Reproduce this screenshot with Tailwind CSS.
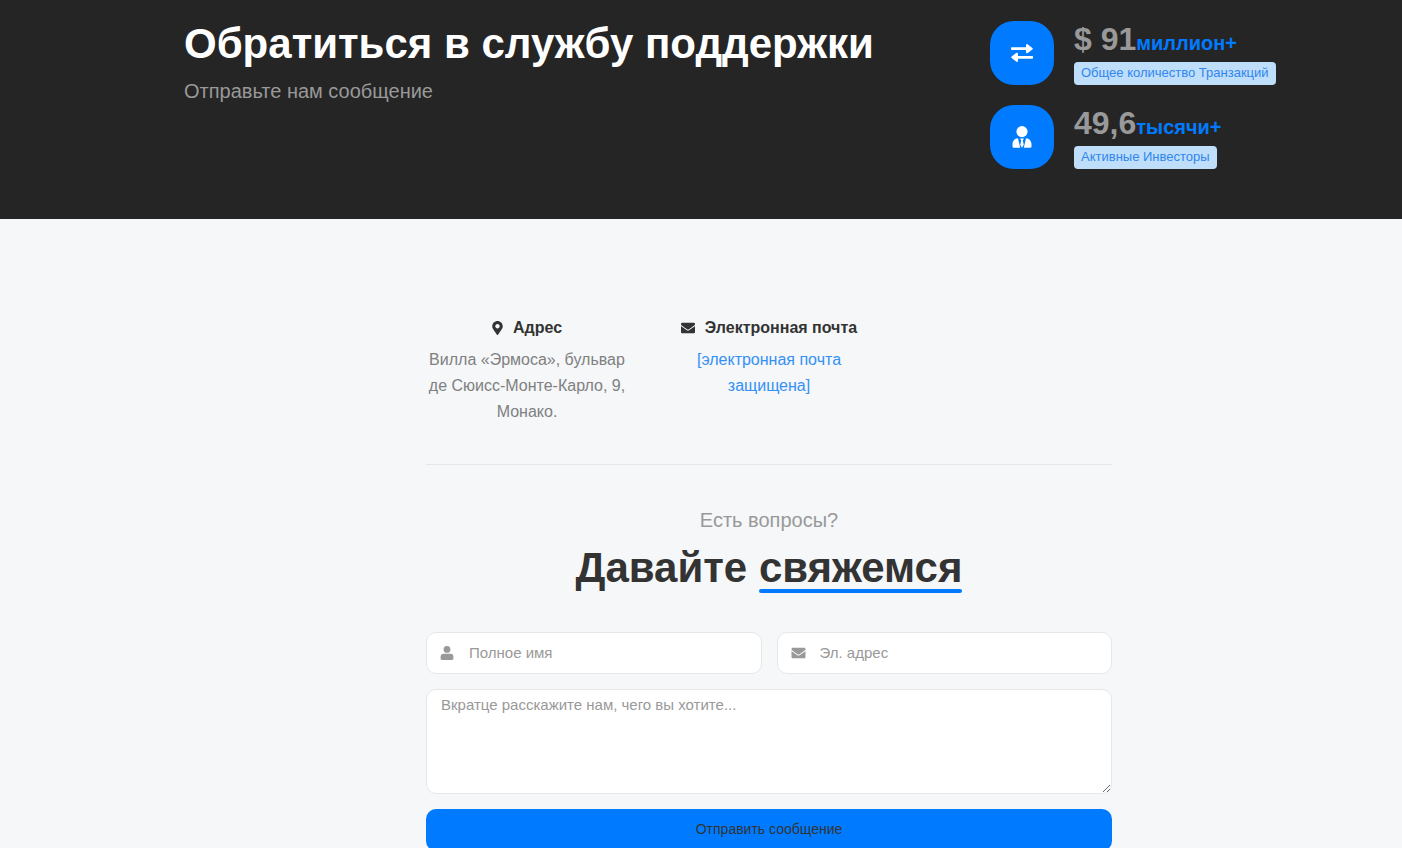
<!DOCTYPE html>
<html lang="ru">
<head>
  <meta charset="UTF-8" />
  <meta name="viewport" content="width=device-width, initial-scale=1.0"/>
  <title>Обратиться в службу поддержки</title>
  <script src="https://cdn.jsdelivr.net/npm/@tailwindcss/browser@4"></script>
</head>
<body class="bg-[#f5f7f9] font-['Liberation_Sans',Arial,sans-serif] text-base text-[#808080] overflow-x-hidden">
  <header class="bg-[#252525] pl-[184px] pr-12 pt-5 pb-[50px]">
    <div class="flex justify-between">
      <div>
        <h1 class="text-[42px] leading-[48px] font-bold text-white">Обратиться в службу поддержки</h1>
        <p class="mt-2 text-xl leading-[30px] text-[#999]">Отправьте нам сообщение</p>
      </div>
      <div class="w-[364px] shrink-0 space-y-5 pt-px">
        <div class="flex gap-5">
          <div class="w-16 h-16 rounded-3xl bg-[#007bff] flex items-center justify-center shrink-0">
            <svg class="w-[22px] h-[18px]" viewBox="0 0 22 18" fill="#fff"><path d="M.8 3.2H15V1.3c0-1.1 1.1-1.6 1.8-.9l4.6 3.6c.5.4.5 1 0 1.4l-4.6 3.6c-.7.7-1.8.2-1.8-.9V6.1H.8A.8.8 0 0 1 0 5.300V4a.8.8 0 0 1 .8-.8z"/><path d="M21.200 14.800H7v1.900c0 1.100-1.100 1.600-1.800.9L.6 14c-.5-.4-.5-1 0-1.400L5.200 9c.7-.7 1.800-.2 1.800.9v2h14.200a.8.8 0 0 1 .8.8V14a.8.8 0 0 1-.8.8z"/></svg>
          </div>
          <div>
            <h2 class="pb-1 text-[32px] leading-[37px] font-bold text-[#999]">$ 91<span class="text-xl leading-none text-[#007bff]">миллион+</span></h2>
            <span class="block w-fit rounded-sm bg-[#bfdefa] px-[7px] pb-0.5 text-[13px] leading-[21px] text-[#2f86ee]">Общее количество Транзакций</span>
          </div>
        </div>
        <div class="flex gap-5">
          <div class="w-16 h-16 rounded-3xl bg-[#007bff] flex items-center justify-center shrink-0">
            <svg class="w-[22px] h-[22px]" viewBox="0 0 22 22" fill="#fff"><circle cx="11" cy="5.600" r="5.600"/><path d="M7 12.200L9.200 21.800H2.900a1.400 1.400 0 0 1-1.400-1.400v-2.200c0-3.400 2.300-5.800 5.500-6zM15 12.200L12.800 21.800h6.300a1.400 1.400 0 0 0 1.400-1.400v-2.200c0-3.400-2.300-5.800-5.500-6zM9 12.400h4l-1.200 2.200 1 4.200L11 21.800l-1.800-3 1-4.200z"/></svg>
          </div>
          <div>
            <h2 class="pb-1 text-[32px] leading-[37px] font-bold text-[#999]">49,6<span class="text-xl leading-none text-[#007bff]">тысячи+</span></h2>
            <span class="block w-fit rounded-sm bg-[#bfdefa] px-[7px] pb-0.5 text-[13px] leading-[21px] text-[#2f86ee]">Активные Инвесторы</span>
          </div>
        </div>
      </div>
    </div>
  </header>

  <main class="ml-[426px] mr-[290px] pt-24">
    <div class="grid grid-cols-3 gap-10 text-center border-b border-[#e5e7e9] pb-[39px]">
      <div>
        <h3 class="flex items-center justify-center gap-[10px] font-bold leading-[26px] text-[#333]">
          <svg class="w-[11px] h-[14px]" viewBox="0 0 384 512" fill="currentColor"><path d="M172.268 501.67C26.97 291.031 0 269.413 0 192 0 85.961 85.961 0 192 0s192 85.961 192 192c0 77.413-26.97 99.031-172.268 309.67-9.535 13.774-29.93 13.773-39.464 0zM192 272c44.183 0 80-35.817 80-80s-35.817-80-80-80-80 35.817-80 80 35.817 80 80 80z"/></svg>
          Адрес
        </h3>
        <p class="mt-[6px] leading-[26px]">Вилла «Эрмоса», бульвар де Сюисс-Монте-Карло, 9, Монако.</p>
      </div>
      <div>
        <h3 class="flex items-center justify-center gap-[10px] font-bold leading-[26px] text-[#333] whitespace-nowrap">
          <svg class="w-[14px] h-[14px]" viewBox="0 0 512 512" fill="currentColor"><path d="M502.3 190.8c3.9-3.1 9.7-.2 9.7 4.7V400c0 26.5-21.5 48-48 48H48c-26.5 0-48-21.5-48-48V195.6c0-5 5.7-7.8 9.7-4.7 22.4 17.4 52.1 39.5 154.1 113.6 21.1 15.4 56.7 47.8 92.2 47.6 35.7.3 72-32.8 92.3-47.6 102-74.1 131.6-96.3 154-113.7zM256 320c23.2.4 56.6-29.2 73.4-41.4 132.7-96.3 142.8-104.7 173.4-128.7 5.8-4.5 9.2-11.5 9.2-18.9v-19c0-26.5-21.5-48-48-48H48c-26.5 0-48 21.5-48 48v19c0 7.4 3.4 14.3 9.2 18.9 30.6 23.9 40.7 32.4 173.4 128.7 16.8 12.2 50.2 41.8 73.4 41.4z"/></svg>
          Электронная почта
        </h3>
        <p class="mt-[6px] leading-[26px]"><a href="#" class="text-[#3490f5]">[электронная почта защищена]</a></p>
      </div>
    </div>

    <div class="pt-10 text-center">
      <p class="text-xl leading-[30px] text-[#999]">Есть вопросы?</p>
      <h2 class="mt-2 text-[42px] leading-[50px] font-bold text-[#333] whitespace-nowrap">Давайте <span class="relative inline-block">свяжемся<span class="absolute left-0 right-0 bottom-0 h-1 rounded-full bg-[#007bff]"></span></span></h2>
    </div>

    <form class="mt-[39px] pb-10 grid grid-cols-2 gap-[15px] text-[15px]">
      <div class="relative">
        <label for="name" class="absolute left-[14px] top-[14px]" aria-label="Полное имя">
          <svg class="w-[14px] h-[14px]" viewBox="0 0 14 14" fill="#999"><circle cx="7" cy="3.4" r="3.4"/><path d="M3.6 7.8h6.8a3 3 0 0 1 3 3v1.6a1.6 1.6 0 0 1-1.6 1.6H2.2a1.6 1.6 0 0 1-1.6-1.6v-1.6a3 3 0 0 1 3-3z"/></svg>
        </label>
        <input id="name" type="text" placeholder="Полное имя" class="block w-full h-[42px] rounded-[10px] border border-[#e5e7e9] bg-white pl-[42px] pr-3 pb-0.5 placeholder:text-[#999] focus:outline-none focus:border-[#007bff]">
      </div>
      <div class="relative">
        <label for="email" class="absolute left-[14px] top-[14px]" aria-label="Эл. адрес">
          <svg class="w-[15px] h-[14px]" viewBox="0 0 512 512" fill="#999"><path d="M502.3 190.8c3.9-3.1 9.7-.2 9.7 4.7V400c0 26.5-21.5 48-48 48H48c-26.5 0-48-21.5-48-48V195.6c0-5 5.7-7.8 9.7-4.7 22.4 17.4 52.1 39.5 154.1 113.6 21.1 15.4 56.7 47.8 92.2 47.6 35.7.3 72-32.8 92.3-47.6 102-74.1 131.6-96.3 154-113.7zM256 320c23.2.4 56.6-29.2 73.4-41.4 132.7-96.3 142.8-104.7 173.4-128.7 5.8-4.5 9.2-11.5 9.2-18.9v-19c0-26.5-21.5-48-48-48H48c-26.5 0-48 21.5-48 48v19c0 7.4 3.4 14.3 9.2 18.9 30.6 23.9 40.7 32.4 173.4 128.7 16.8 12.2 50.2 41.8 73.4 41.4z"/></svg>
        </label>
        <input id="email" type="email" placeholder="Эл. адрес" class="block w-full h-[42px] rounded-[10px] border border-[#e5e7e9] bg-white pl-[42px] pr-3 pb-0.5 placeholder:text-[#999] focus:outline-none focus:border-[#007bff]">
      </div>
      <textarea id="message" aria-label="Сообщение" placeholder="Вкратце расскажите нам, чего вы хотите..." class="col-span-2 block w-full h-[105px] rounded-[10px] border border-[#e5e7e9] bg-white px-[14px] py-1 leading-[22px] resize placeholder:text-[#999] focus:outline-none focus:border-[#007bff]"></textarea>
      <button type="submit" class="col-span-2 h-[42px] rounded-[10px] bg-[#007bff] pb-0.5 text-sm text-[#333] hover:bg-[#006fe6]">Отправить сообщение</button>
    </form>
  </main>
</body>
</html>
